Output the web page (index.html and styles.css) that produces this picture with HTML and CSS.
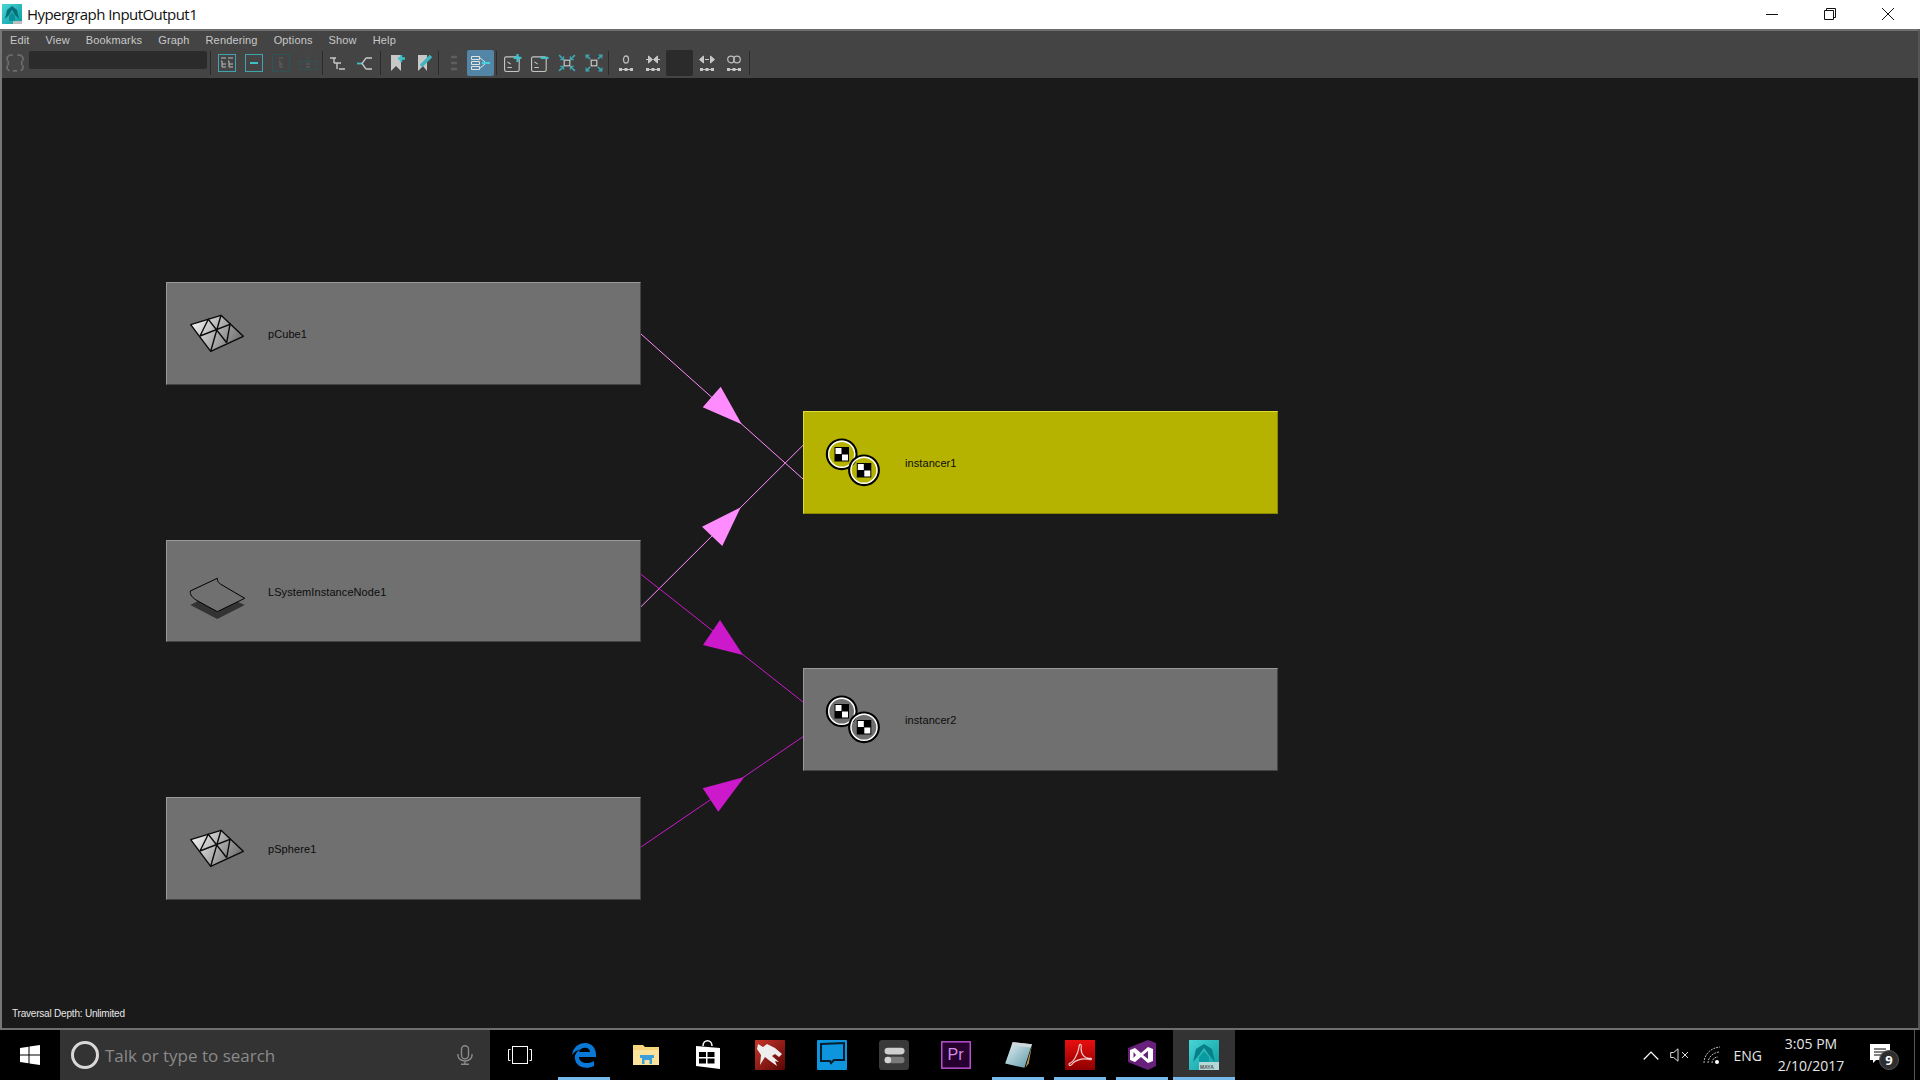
FILE: index.html
```html
<!DOCTYPE html>
<html lang="en">
<head>
<meta charset="utf-8">
<title>Hypergraph InputOutput1</title>
<link rel="stylesheet" href="styles.css">
</head>
<body>
<svg class="defs" width="0" height="0">
  <defs>
    <linearGradient id="meshGrad" x1="0" y1="0" x2="1" y2="0.4"><stop offset="0" stop-color="#ffffff"/><stop offset="1" stop-color="#777777"/></linearGradient>
    <linearGradient id="wolfGrad" x1="0" y1="0" x2="1" y2="1"><stop offset="0" stop-color="#c8352a"/><stop offset="1" stop-color="#5a0505"/></linearGradient>
    <linearGradient id="pdfGrad" x1="0" y1="0" x2="0" y2="1"><stop offset="0" stop-color="#e80f0f"/><stop offset="1" stop-color="#8e0000"/></linearGradient>
    <linearGradient id="mayaGrad" x1="0" y1="0" x2="1" y2="1"><stop offset="0" stop-color="#48d6d6"/><stop offset="1" stop-color="#0a9aa0"/></linearGradient>
    <linearGradient id="noteGrad" x1="0" y1="0" x2="1" y2="1"><stop offset="0" stop-color="#e6f3f5"/><stop offset="1" stop-color="#5c97a6"/></linearGradient>
    <symbol id="mesh" viewBox="0 0 60 50">
      <path d="M4.7 15.7 35 6.3 57.3 27.3 24.7 42.3Z" fill="url(#meshGrad)" stroke="#0a0a0a" stroke-width="1.4" stroke-linejoin="round"/>
      <path d="M14 27 22.3 10.3 40.7 33.7M35 6.300 24.7 42.300M14 27 44 15.300 40.7 33.700" fill="none" stroke="#0a0a0a" stroke-width="1.4"/>
    </symbol>
    <symbol id="instancer" viewBox="0 0 60 50">
      <circle cx="18.7" cy="16.3" r="14.800" fill="none" stroke="#000" stroke-width="2.200"/>
      <circle cx="18.7" cy="16.3" r="13" fill="none" stroke="#fff" stroke-width="1.4"/>
      <rect x="11.5" y="9" width="14.5" height="14.5" fill="#000"/>
      <rect x="12.5" y="10" width="6" height="6" fill="#fff"/><rect x="19" y="16.5" width="6" height="6" fill="#fff"/>
      <circle cx="41" cy="32.3" r="14.800" fill="none" stroke="#000" stroke-width="2.200"/>
      <circle cx="41" cy="32.3" r="13" fill="none" stroke="#fff" stroke-width="1.4"/>
      <rect x="33.8" y="25" width="14.5" height="14.5" fill="#000"/>
      <rect x="34.8" y="26" width="6" height="6" fill="#fff"/><rect x="41.300" y="32.500" width="6" height="6" fill="#fff"/>
    </symbol>
  </defs>
</svg>

<header class="titlebar">
  <svg class="title-logo" viewBox="0 0 20 20"><rect width="20" height="20" fill="url(#mayaGrad)"/><path d="M3 15 5 6 10 2 15 6 17 15 13 11 10 6 7 11Z" fill="#066f78"/><path d="M7 12 10 8 13 12 13 17H7Z" fill="#0c8f97"/><rect x="11" y="17" width="9" height="3" fill="#bdbdbd"/></svg>
  <span class="title-text">Hypergraph InputOutput1</span>
  <div class="win-controls">
    <svg class="win-btn" viewBox="0 0 12 12"><path d="M0 6.5H12" stroke="#111" fill="none"/></svg>
    <svg class="win-btn" viewBox="0 0 12 12"><path d="M.5 2.5h9v9h-9zM2.5 2.5v-2h9v9h-2" stroke="#111" fill="none"/></svg>
    <svg class="win-btn" viewBox="0 0 12 12"><path d="M0 0 12 12M12 0 0 12" stroke="#111" fill="none"/></svg>
  </div>
</header>

<main class="window">
  <nav class="menubar">
    <span class="menu">Edit</span><span class="menu">View</span><span class="menu">Bookmarks</span><span class="menu">Graph</span><span class="menu">Rendering</span><span class="menu">Options</span><span class="menu">Show</span><span class="menu">Help</span>
  </nav>
  <div class="toolbar">
    <div class="tool tool-first"><svg class="ico" viewBox="0 0 16 16"><path d="M3 1h3M10 1h3l2 2v3M15 10v3l-2 2M10 15H6M3 15l-2-2v-3M1 6V3l2-2M2 6v4M14 6v4" fill="none" stroke="#6b6b6b" stroke-width="1.6"/></svg></div>
    <div class="search-field"></div>
    <span class="sep sa"></span>
    <div class="group ga">
      <div class="tool"><svg class="ico" viewBox="0 0 18 18"><rect x=".5" y=".5" width="17" height="17" fill="none" stroke="#3fa4ad"/><path d="M3 4h5M3 7h1v6h4M4 10h4M10 4h5M10 7h1v6h4M11 10h4" fill="none" stroke="#bdbdbd"/></svg></div>
      <div class="tool"><svg class="ico" viewBox="0 0 18 18"><rect x=".5" y=".5" width="17" height="17" fill="none" stroke="#3fa4ad"/><rect x="5" y="8" width="8" height="2" fill="#3fc0cb"/></svg></div>
      <div class="tool"><svg class="ico" viewBox="0 0 18 18"><rect x=".5" y=".5" width="17" height="17" fill="none" stroke="#2e5458"/><path d="M7 4h4M7 7h1v6h3M8 10h3" fill="none" stroke="#626262"/></svg></div>
      <div class="tool"><svg class="ico" viewBox="0 0 18 18"><path d="M.5 7.5h17v8H.5zM9 7V1" fill="none" stroke="#2e5458"/><path d="M7 10h4M7 13h4" stroke="#626262" fill="none"/></svg></div>
    </div>
    <span class="sep sb"></span>
    <div class="group gb">
      <div class="tool"><svg class="ico-b" viewBox="0 0 15 13"><path d="M0 1h6M4 1v5M4 6h7M7 6v6M9 12h6" fill="none" stroke="#c8c8c8" stroke-width="1.400"/></svg></div>
      <div class="tool"><svg class="ico-b" viewBox="0 0 15 13"><path d="M0 6.500h5" stroke="#3fc0cb" stroke-width="1.800"/><path d="M9 1h6M9 12h6M9 1 5 6.500l4 5.500" fill="none" stroke="#c8c8c8" stroke-width="1.300"/></svg></div>
    </div>
    <span class="sep sc"></span>
    <div class="group gc">
      <div class="tool"><svg class="ico" viewBox="0 0 16 18"><path d="M1 1h10v16l-5-5-5 5z" fill="#c8c8c8"/><path d="M11 1v7M8 4.500h7" stroke="#3fc0cb" stroke-width="2.400"/></svg></div>
      <div class="tool"><svg class="ico" viewBox="0 0 16 18"><path d="M1 1h9v16l-4-5-5 5z" fill="#c8c8c8"/><path d="M4 12 14 2" stroke="#3fb5c0" stroke-width="3.500"/></svg></div>
    </div>
    <span class="sep sd"></span>
    <div class="group gd">
      <div class="tool"><svg class="ico-sm" viewBox="0 0 8 16"><path d="M1 2h6M1 8h6M1 14h6" stroke="#5e5e5e" stroke-width="2.400"/></svg></div>
      <div class="tool tool-active"><svg class="ico-lg" viewBox="0 0 20 16"><path d="M.5 1.500h8v3h-8zM.5 6.500h8v3h-8zM.5 11.500h8v3h-8zM8 2l6 5M8 14l6-5" fill="none" stroke="#e2e2e2"/><rect x="11" y="7" width="8" height="2" fill="#48d0dc"/></svg></div>
    </div>
    <span class="sep se"></span>
    <div class="group ge">
      <div class="tool"><svg class="ico" viewBox="0 0 16 16"><rect x=".5" y="2.500" width="13" height="13" rx="1.500" fill="none" stroke="#c4c4c4"/><path d="M3 7l3 2M3 12h4" stroke="#c4c4c4" fill="none"/><path d="M12 0v7M8.500 3.500h7" stroke="#3fc0cb" stroke-width="2"/></svg></div>
      <div class="tool"><svg class="ico" viewBox="0 0 16 16"><rect x=".5" y="2.500" width="13" height="13" rx="1.500" fill="none" stroke="#c4c4c4"/><path d="M3 7l3 2M3 12h4" stroke="#c4c4c4" fill="none"/><path d="M8.500 3.500h7" stroke="#3fc0cb" stroke-width="2"/></svg></div>
      <div class="tool"><svg class="ico" viewBox="0 0 16 16"><rect x="5.500" y="5.500" width="5" height="5" fill="none" stroke="#d0d0d0"/><path d="M1 1 4.500 4.500M15 1 11.500 4.500M1 15 4.500 11.500M15 15 11.500 11.500" stroke="#3fa9b5" stroke-width="1.400"/><path d="M5 2v3H2M11 2v3h3M5 14v-3H2M11 14v-3h3" fill="none" stroke="#3fa9b5"/></svg></div>
      <div class="tool"><svg class="ico" viewBox="0 0 16 16"><rect x="5.500" y="5.500" width="5" height="5" fill="none" stroke="#d0d0d0"/><path d="M1 1 4.500 4.500M15 1 11.500 4.500M1 15 4.500 11.500M15 15 11.500 11.500" stroke="#3fa9b5" stroke-width="1.400"/><path d="M1 4V1h3M12 1h3v3M1 12v3h3M12 15h3v-3" fill="none" stroke="#3fa9b5"/></svg></div>
    </div>
    <span class="sep sf"></span>
    <div class="group gf">
      <div class="tool"><svg class="ico" viewBox="0 0 16 18"><ellipse cx="8" cy="5.500" rx="2.500" ry="3.500" fill="none" stroke="#bdbdbd" stroke-width="1.300"/><path d="M1 14h3v3H1zM6.500 14h3v3h-3zM12 14h3v3h-3z" fill="#c8c8c8"/><path d="M4 15.500h8" stroke="#c8c8c8"/></svg></div>
      <div class="tool"><svg class="ico" viewBox="0 0 16 18"><path d="M1 5.500h4M15 5.500h-4M3.500 2l4 3.500-4 3.500zM12.500 2l-4 3.500 4 3.500z" fill="#c8c8c8" stroke="#c8c8c8"/><path d="M1 14h3v3H1zM6.500 14h3v3h-3zM12 14h3v3h-3z" fill="#c8c8c8"/><path d="M4 15.500h8" stroke="#c8c8c8"/></svg></div>
      <div class="tool tool-dark"></div>
      <div class="tool"><svg class="ico" viewBox="0 0 16 18"><path d="M6 5.500h4M4.500 2l-4 3.500 4 3.500zM11.500 2l4 3.500-4 3.500z" fill="#c8c8c8" stroke="#c8c8c8"/><path d="M1 14h3v3H1zM6.500 14h3v3h-3zM12 14h3v3h-3z" fill="#c8c8c8"/><path d="M4 15.500h8" stroke="#c8c8c8"/></svg></div>
      <div class="tool"><svg class="ico" viewBox="0 0 16 18"><circle cx="5" cy="5.500" r="3.300" fill="none" stroke="#bdbdbd" stroke-width="1.200"/><circle cx="11" cy="5.500" r="3.300" fill="none" stroke="#bdbdbd" stroke-width="1.200"/><path d="M1 14h3v3H1zM6.500 14h3v3h-3zM12 14h3v3h-3z" fill="#c8c8c8"/><path d="M4 15.500h8" stroke="#c8c8c8"/></svg></div>
    </div>
    <span class="sep sg"></span>
  </div>

  <section class="canvas">
    <svg class="edges" viewBox="2 78 1916 950" width="1916" height="950">
      <g class="edge-light">
        <path d="M641 334 803 479M641 606.700 803 445.300" fill="none"/>
        <path d="M720.700 386.700 702.700 407.300 741.700 424.300Z"/>
        <path d="M740.700 507.300 702 526.700 722.300 546Z"/>
      </g>
      <g class="edge-dark">
        <path d="M641 574.300 803 702M641 847 803 736.700" fill="none"/>
        <path d="M720 620 703 645 743 655Z"/>
        <path d="M744.300 777 702.700 788.300 718.300 811.700Z"/>
      </g>
    </svg>
    <div class="node n-cube"><svg class="node-icon"><use href="#mesh"/></svg><span class="node-label">pCube1</span></div>
    <div class="node n-lsys">
      <svg class="node-icon" viewBox="0 0 60 50">
        <path d="M4.300 38 12 34 31 44 50 34 58.700 38 31.300 52Z" fill="#333"/>
        <path d="M4.300 24 31.300 11.300C31.500 14 32 16 36 18L58.700 31.300 31.300 44.700 10 33C6 30 4 28 4.300 24Z" fill="#707070" stroke="#000" stroke-width="1"/>
      </svg>
      <span class="node-label">LSystemInstanceNode1</span>
    </div>
    <div class="node n-sphere"><svg class="node-icon"><use href="#mesh"/></svg><span class="node-label">pSphere1</span></div>
    <div class="node node-selected n-inst1"><svg class="node-icon"><use href="#instancer"/></svg><span class="node-label">instancer1</span></div>
    <div class="node n-inst2"><svg class="node-icon"><use href="#instancer"/></svg><span class="node-label">instancer2</span></div>
    <div class="status">Traversal Depth: Unlimited</div>
  </section>
</main>

<footer class="taskbar">
  <div class="start"><svg class="win-logo" viewBox="0 0 20 20"><path d="M0 3 8.500 1.800V9.500H0ZM9.500 1.600 20 0V9.500H9.500ZM0 10.500H8.500V18.200L0 17ZM9.500 10.500H20V20L9.500 18.400Z" fill="#fff"/></svg></div>
  <div class="search">
    <span class="cortana"></span>
    <span class="search-text">Talk or type to search</span>
    <svg class="mic" viewBox="0 0 16 20"><rect x="4.500" y=".7" width="7" height="13" rx="3.500" fill="none" stroke="#8a8a8a" stroke-width="1.400"/><path d="M1 9v1.500a7 5.500 0 0 0 14 0V9M8 16v3M4 19.300h8" fill="none" stroke="#8a8a8a" stroke-width="1.400"/></svg>
  </div>
  <div class="tasks">
    <div class="task"><svg class="t-view" viewBox="0 0 24 18"><rect x="4.500" y=".5" width="15" height="17" fill="none" stroke="#fff"/><path d="M2.500 3.500H.5v11h2M21.500 3.500h2v11h-2" fill="none" stroke="#fff"/></svg></div>
    <div class="task open"><svg class="task-ico" viewBox="0 0 26 26"><path d="M1 13C2 5 8 1 14 1c7 0 11 5 11 12v2H8c0 6 9 8 15 4v5c-8 4-18 1-19-7-1-4 2-8 6-10-4 1-7 3-9 6ZM8 10h11c0-5-9-6-11 0Z" fill="#0a78d7"/></svg></div>
    <div class="task"><svg class="t-folder" viewBox="0 0 28 24"><path d="M1 2h10l2 2h14v18H1Z" fill="#f5d67e"/><path d="M1 7h26v15H1Z" fill="#fbe39b"/><path d="M10 13h10v8h-2.500v-4h-5v4H10ZM8 12h14v3H8Z" fill="#3c9fdc"/></svg></div>
    <div class="task"><svg class="t-store" viewBox="0 0 26 30"><path d="M8 6c0-7 9-7 9 0" fill="none" stroke="#fff" stroke-width="1.500"/><path d="M1 6 25 8V29L1 26Z" fill="#fff"/><path d="M4 12h7v5H4ZM12.500 12h7v5h-7ZM4 18.500h7v5H4ZM12.500 18.500h7v5h-7Z" fill="#000"/></svg></div>
    <div class="task"><svg class="task-ico big" viewBox="0 0 30 30"><rect width="30" height="30" rx="1" fill="url(#wolfGrad)"/><path d="M3 4 8 7 12 4 20 8 27 14 24 17 20 14 17 16 24 22 20 21 22 26 15 21 10 17 5 25 6 15 2 9Z" fill="#eee"/></svg></div>
    <div class="task"><svg class="task-ico big" viewBox="0 0 30 30"><rect width="30" height="30" rx="1" fill="#0d96de"/><path d="M4 4 27 3V20H17L14 23 13 21H4Z" fill="none" stroke="#0a1d2c" stroke-width="2"/></svg></div>
    <div class="task"><svg class="task-ico big" viewBox="0 0 27 27"><rect width="27" height="27" rx="3" fill="#393939"/><rect x="5" y="7" width="18" height="6" rx="3" fill="#cfcfcf"/><rect x="5" y="15" width="18" height="6" rx="3" fill="#7a7a7a"/><circle cx="8" cy="18" r="3" fill="#d4d4d4"/></svg></div>
    <div class="task"><svg class="task-ico big" viewBox="0 0 28 26"><rect x=".7" y=".7" width="26.600" height="24.600" fill="#26002e" stroke="#b74fd0" stroke-width="1.400"/><text x="6" y="18" class="pr">Pr</text></svg></div>
    <div class="task open"><svg class="task-ico big" viewBox="0 0 28 28"><path d="M9 2 27 4 20 26 2 22Z" fill="url(#noteGrad)"/><path d="M9 2 27 4 26 7 8 5Z" fill="#cfd8da"/><path d="M27 5 21 26 24 22Z" fill="#b49352"/></svg></div>
    <div class="task open"><svg class="task-ico big" viewBox="0 0 28 28"><rect width="28" height="28" fill="url(#pdfGrad)"/><path d="M4 22c4-1 8-9 9-15 0-4 3-4 2 1 0 6 4 10 9 9 2 1 0 2-2 1-5-1-10 0-14 3-2 3-5 4-4 1Z" fill="none" stroke="#f4cfcf" stroke-width="1.100"/></svg></div>
    <div class="task open"><svg class="task-ico big" viewBox="0 0 28 30"><path d="M0 8 20 0 28 3V26L20 30 0 22Z" fill="#68217a"/><path d="M2 10 7 8 13 13 20 7 25 9V21L20 23 13 17 7 22 2 20Z" fill="#fff"/><path d="M5.500 12 8 15 5.500 18ZM20 11V19L15 15Z" fill="#68217a"/></svg></div>
    <div class="task task-current"><svg class="task-ico big" viewBox="0 0 30 30"><rect width="30" height="30" fill="url(#mayaGrad)"/><path d="M4 22 7 9 15 4 23 9 26 22 20 15 15 8 10 15Z" fill="#07808a"/><path d="M10 17 15 11 20 17V24H10Z" fill="#0c9aa2"/><rect x="10" y="22" width="20" height="8" fill="#b7d8d9"/><text x="11" y="28.500" class="maya">MAYA</text></svg></div>
  </div>
  <div class="tray">
    <svg class="t-chev" viewBox="0 0 16 9"><path d="M.7 8.500 8 1l7.300 7.500" fill="none" stroke="#fff" stroke-width="1.200"/></svg>
    <svg class="t-vol" viewBox="0 0 20 14"><path d="M.7 4.500h3L8 .8v12.400L3.700 9.500h-3ZM12 4l6 6M18 4l-6 6" fill="none" stroke="#ddd"/></svg>
    <svg class="t-wifi" viewBox="0 0 18 18"><path d="M1 17C1 9 7 2 17 1M5 17c0-5 4-10 11-11M9 17c0-3 2-6 6-6" fill="none" stroke="#bbb" stroke-dasharray="2 1"/><circle cx="14" cy="16" r="2" fill="#fff"/></svg>
    <span class="t-lang">ENG</span>
    <div class="clock"><span>3:05 PM</span><span>2/10/2017</span></div>
    <div class="notif">
      <svg class="notif-ico" viewBox="0 0 20 19"><path d="M0 0H20V16H6L3 19V16H0Z" fill="#fff"/><path d="M4 5h12M4 8h12M4 11h12" stroke="#000"/></svg>
      <span class="badge">9</span>
    </div>
    <span class="desk-line"></span>
  </div>
</footer>
</body>
</html>
```

FILE: styles.css
```css
* { box-sizing: border-box; }
html, body { margin: 0; padding: 0; }
body { width: 1920px; height: 1080px; display: flex; flex-direction: column; overflow: hidden; background: #000; font-family: "Liberation Sans", sans-serif; }
.defs { position: absolute; }

/* title bar */
.titlebar { height: 29px; background: #fff; display: flex; align-items: center; padding: 0 0 1px 2px; flex: none; }
.title-logo { width: 20px; height: 20px; }
.title-text { margin-left: 5px; font: 15px "Open Sans", sans-serif; color: #111; letter-spacing: -0.55px; }
.win-controls { margin-left: auto; display: flex; }
.win-btn { width: 12px; height: 12px; margin-right: 46px; overflow: visible; }
.win-btn:last-child { margin-right: 26px; }

/* window */
.window { height: 1001px; flex: none; display: flex; flex-direction: column; border: 2px solid #6e6e6e; border-left-color: #777; border-right-color: #555; background: #444; }
.menubar { height: 19px; display: flex; align-items: center; gap: 16px; padding: 0 0 2px 8px; flex: none; font: 11px "Liberation Sans", sans-serif; color: #c8c8c8; }
.menu { letter-spacing: .15px; }

.toolbar { height: 28px; display: flex; align-items: center; padding-bottom: 2px; flex: none; }
.tool { width: 27px; height: 26px; display: flex; align-items: center; justify-content: center; flex: none; }
.tool-first { width: 26px; }
.tool-active { background: #5285a6; border-radius: 2px; }
.tool-dark { background: #2b2b2b; border-radius: 2px; }
.ico { width: 18px; height: 18px; }
.ico-b { width: 15px; height: 13px; }
.ico-sm { width: 8px; height: 16px; }
.ico-lg { width: 20px; height: 16px; }
.search-field { width: 178px; height: 18px; margin: 0 0 6px 1px; background: #2b2b2b; border-radius: 2px; flex: none; }
.group { display: flex; flex: none; }
.sep { width: 1px; height: 24px; background: #2b2b2b; flex: none; }
.sa { margin-left: 3px; }
.ga { margin-left: 2px; }
.sb { margin-left: 1px; }
.gb { margin-left: 1px; }
.sc { margin-left: 2px; }
.gc { margin-left: 3px; }
.gd { margin-left: 1px; }
.se { margin-left: 2px; }
.ge { margin-left: 2px; }
.sf { margin-left: 1px; }
.gf { margin-left: 3px; }
.sg { margin-left: 2px; }

/* canvas */
.canvas { position: relative; flex: 1; background: #1a1a1a; overflow: hidden; }
.edges { position: absolute; left: 0; top: 0; }
.edge-light path { fill: #ff8cff; }
.edge-light path[fill="none"] { fill: none; stroke: #ff8cff; stroke-width: 1; }
.edge-dark path { fill: #cc19cc; }
.edge-dark path[fill="none"] { fill: none; stroke: #cc19cc; stroke-width: 1; }

.node { position: absolute; width: 475px; height: 103px; background: #707070; border: 1px solid #444; border-top-color: #9a9a9a; border-left-color: #9a9a9a; display: flex; align-items: center; padding-left: 19px; }
.node-icon { width: 60px; height: 50px; overflow: visible; flex: none; }
.node-label { margin-left: 22px; font: 11px "Liberation Sans", sans-serif; color: #0c0c0c; letter-spacing: .08px; }
.node-selected { background: #b5b300; border-color: #dedc33 #8a8800 #8a8800 #dedc33; }
.n-cube { left: 164px; top: 204px; }
.n-lsys { left: 164px; top: 462px; height: 102px; padding-top: 1px; }
.n-sphere { left: 164px; top: 719px; }
.n-inst1 { left: 801px; top: 333px; }
.n-inst2 { left: 801px; top: 590px; }
.status { position: absolute; left: 10px; bottom: 9px; font: 10px "Liberation Sans", sans-serif; color: #e8e8e8; letter-spacing: -.2px; }

/* taskbar */
.taskbar { height: 50px; flex: none; display: flex; background: #000; position: relative; }
.start { width: 60px; display: flex; align-items: center; justify-content: center; }
.win-logo { width: 20px; height: 20px; }
.search { width: 430px; background: #333; display: flex; align-items: center; padding-left: 11px; }
.cortana { width: 28px; height: 28px; border-radius: 50%; border: 3px solid #d8d8d8; flex: none; }
.search-text { margin-left: 6px; font: 17px "Open Sans", sans-serif; color: #8a8a8a; }
.mic { width: 16px; height: 20px; margin-left: auto; margin-right: 17px; }
.tasks { display: flex; margin-left: 1px; }
.task { width: 62px; height: 50px; display: flex; align-items: center; justify-content: center; position: relative; }
.task.open::after, .task-current::after { content: ""; position: absolute; left: 5px; right: 5px; bottom: 0; height: 3px; background: #76b9ed; }
.task-current { background: #333; }
.task-current::after { left: 0; right: 0; }
.task-ico { width: 26px; height: 26px; }
.task-ico.big { width: 30px; height: 30px; }
.t-view { width: 24px; height: 18px; margin-right: 4px; }
.t-folder { width: 28px; height: 24px; }
.t-store { width: 26px; height: 30px; }
.pr { font: 15px "Liberation Sans", sans-serif; fill: #d48ae6; }
.maya { font: bold 5px "Liberation Sans", sans-serif; fill: #555; }

.tray { margin-left: auto; display: flex; align-items: center; position: relative; color: #e6e6e6; }
.t-chev { width: 16px; height: 9px; margin-right: 11px; }
.t-vol { width: 20px; height: 14px; margin-right: 13px; }
.t-wifi { width: 18px; height: 18px; margin-right: 13px; }
.t-lang { font: 14px "Open Sans", sans-serif; margin-right: 12px; }
.clock { display: flex; flex-direction: column; align-items: center; font: 14px/22px "Open Sans", sans-serif; width: 74px; margin-right: 22px; }
.notif { position: relative; width: 28px; height: 30px; margin-right: 22px; }
.notif-ico { width: 20px; height: 19px; position: absolute; left: 0; top: 4px; }
.badge { position: absolute; left: 9px; top: 10px; width: 20px; height: 20px; border-radius: 50%; background: #2e2e2e; border: 1px solid #555; color: #fff; font: bold 13px/18px "Open Sans", sans-serif; text-align: center; }
.desk-line { position: absolute; right: 5px; top: 0; width: 1px; height: 50px; background: #555; }
```
